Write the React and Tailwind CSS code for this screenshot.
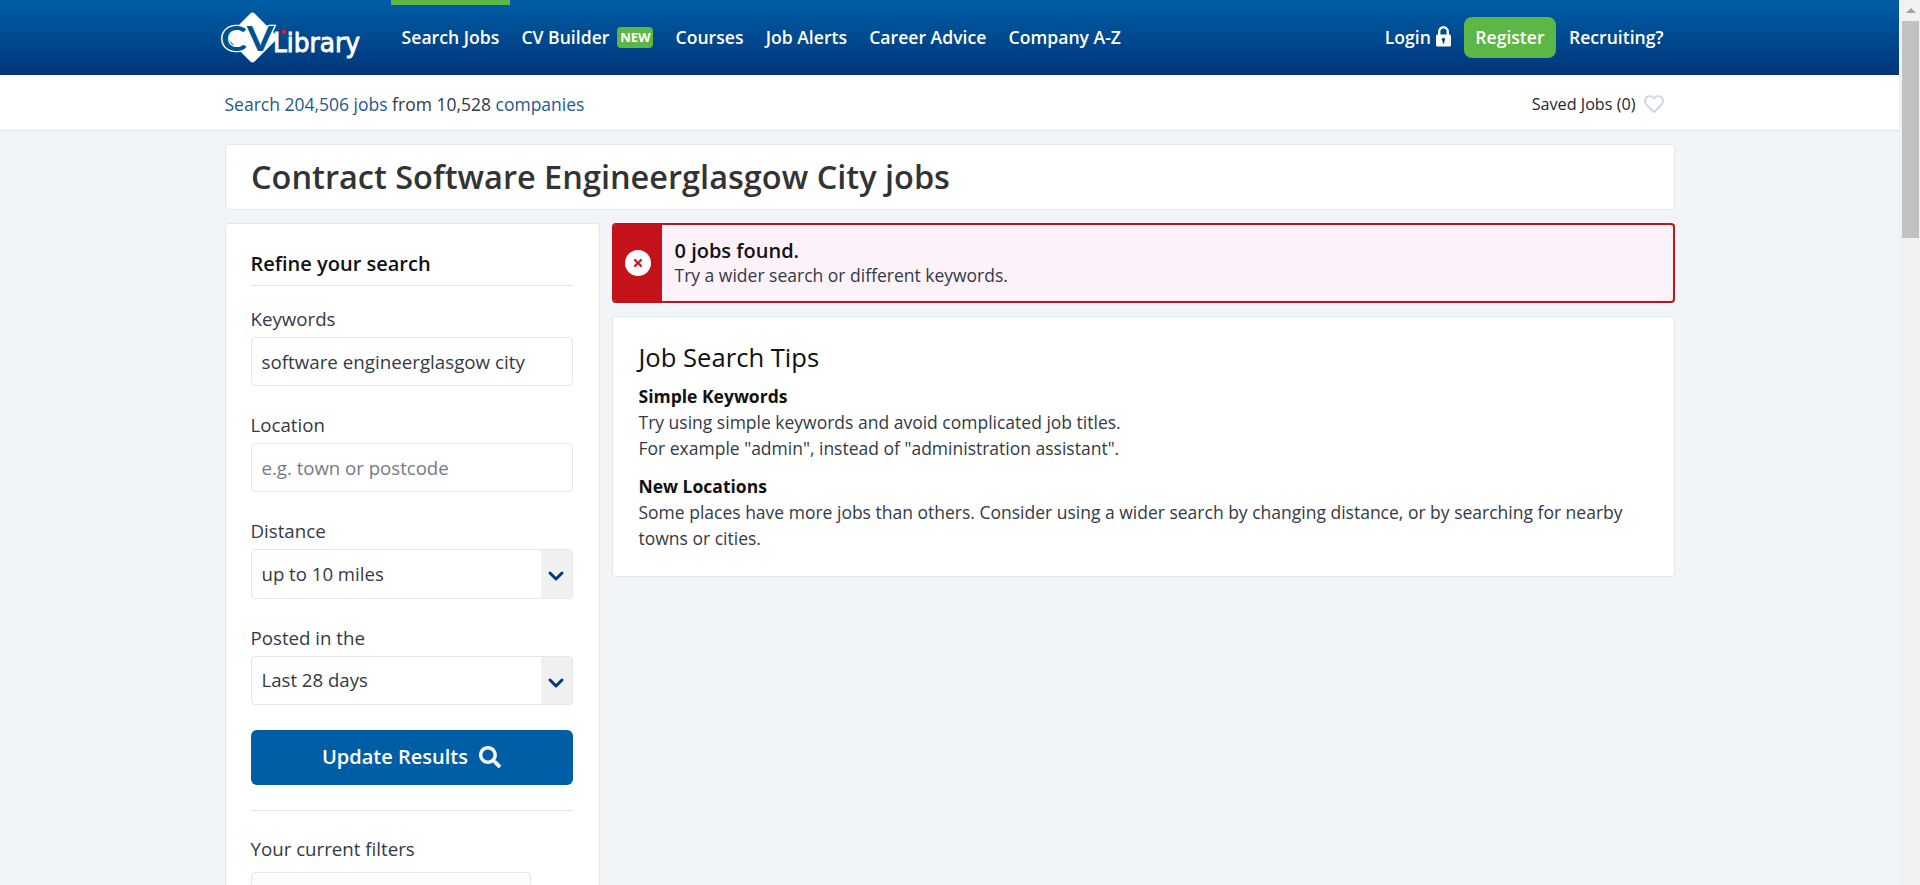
import React from "react";
import { FaSearch, FaRegHeart, FaTimes } from "react-icons/fa";
import { ChevronDown } from "lucide-react";

const Logo = () => (
  <svg width="142" height="60" viewBox="0 0 142 60" className="shrink-0 overflow-visible" aria-label="CV-Library logo">
    <rect x="13" y="11" width="37" height="37" rx="3" fill="#fff" transform="rotate(45 31.5 29.5)" />
    <text x="0" y="43" fontFamily="Lato, sans-serif" fontWeight="700" fontSize="34" fill="#00528f" stroke="#fff" strokeWidth="2.5" paintOrder="stroke" textLength="53" lengthAdjust="spacingAndGlyphs">CV</text>
    <text x="52" y="44" fontFamily="'DejaVu Sans', sans-serif" fontWeight="400" fontSize="27" fill="#fff" stroke="#fff" strokeWidth="0.9" textLength="87" lengthAdjust="spacingAndGlyphs">Library</text>
    <rect x="60" y="20" width="7" height="7" fill="#004a8a" />
    <circle cx="63" cy="24" r="2.4" fill="#e0202c" />
  </svg>
);

const Lock = () => (
  <svg width="15" height="21" viewBox="0 0 15 21" className="ml-[5px] mb-[3px]" aria-hidden="true">
    <path d="M3.2 9V5.6a4.3 4.3 0 0 1 8.6 0V9" fill="none" stroke="#fff" strokeWidth="2.4" />
    <rect x="0" y="8.5" width="15" height="12" rx="1.5" fill="#fff" />
    <circle cx="7.5" cy="13.5" r="1.7" fill="#00478c" />
    <rect x="6.7" y="13.5" width="1.6" height="4" fill="#00478c" />
  </svg>
);

const NavItem = ({ children, active }) => (
  <a className={`flex h-[75px] items-center px-[11.1px] border-t-[5px] pb-[5px] ${active ? "border-[#5cb746]" : "border-transparent"}`}>
    {children}
  </a>
);

const Label = ({ children }) => <div className="h-[26px] mb-[5px] text-[18.7px] leading-[26px] text-[#333a45]">{children}</div>;

const Select = ({ value, tall }) => (
  <div className={`flex ${tall ? "h-[50px]" : "h-[49px]"} rounded-[4px] border border-[#e3e6ea] overflow-hidden bg-white`}>
    <div className="flex-1 pl-[10px] pb-[1px] flex items-center text-[18.6px] text-[#333a45]">{value}</div>
    <div className="w-[31px] bg-[#f0f0f0] flex items-center justify-center">
      <ChevronDown size={24} strokeWidth={3} color="#003a7a" className="mt-[4px]" />
    </div>
  </div>
);

export default function App() {
  return (
    <div className="flex h-[885px] overflow-hidden bg-[#f1f5f8] text-[#333a45]" style={{ fontFamily: "'Open Sans', sans-serif" }}>
      <div className="flex-1 min-w-0">
        <header className="h-[75px] bg-gradient-to-b from-[#005ea6] to-[#00357a]">
          <div className="w-[1450px] mx-auto flex items-center h-full text-white text-[17.6px] font-semibold">
            <div className="-ml-[4px] mr-[28px]"><Logo /></div>
            <nav className="flex items-center gap-0">
              <NavItem active>Search Jobs</NavItem>
              <NavItem>
                CV Builder
                <span className="ml-[8px] h-[21px] w-[36px] rounded-[4px] bg-[#5cb746] text-[13px] font-bold flex items-center justify-center">NEW</span>
              </NavItem>
              <NavItem>Courses</NavItem>
              <NavItem>Job Alerts</NavItem>
              <NavItem>Career Advice</NavItem>
              <NavItem>Company A-Z</NavItem>
            </nav>
            <div className="ml-auto flex items-center pr-[11px]">
              <span>Login</span>
              <Lock />
              <span className="ml-[13px] mr-[13px] flex items-center justify-center w-[92px] h-[41px] rounded-[8px] bg-[#5cb746]">Register</span>
              <span>Recruiting?</span>
            </div>
          </div>
        </header>

        <div className="h-[56px] bg-white border-b border-[#e0e3e7]">
          <div className="w-[1450px] mx-auto h-full flex items-center justify-between text-[17.5px] pr-[11px] pt-[3px]">
            <div>
              <span className="text-[#23598f]">Search 204,506 jobs</span> from 10,528 <span className="text-[#23598f]">companies</span>
            </div>
            <div className="flex items-center text-[16.2px] text-[#222831]">
              Saved Jobs (0)
              <FaRegHeart size={20} color="#cfd7e3" className="ml-[8px]" />
            </div>
          </div>
        </div>

        <main className="w-[1450px] mx-auto pt-[13px]">
          <div className="h-[66px] bg-white border border-[#e3e6ea] rounded-[4px] flex items-center pl-[25.5px] text-[32.5px] font-semibold text-[#333333] mb-[13px]">
            Contract Software Engineerglasgow City jobs
          </div>
          <div className="grid grid-cols-[375px_1fr] gap-[12px] items-start">
            <aside className="bg-white border border-[#e3e6ea] rounded-[4px] pl-[25px] pr-[26px] pt-[27px] h-[800px]">
              <h2 className="h-[25px] leading-[25px] text-[20px] font-semibold text-[#111] mb-[9px]">Refine your search</h2>
              <div className="border-t border-[#e3e6ea] mb-[20px]" />
              <div className="mb-[26px]">
                <Label>Keywords</Label>
                <input readOnly value="software engineerglasgow city" className="w-full h-[49px] rounded-[4px] border border-[#e3e6ea] pl-[10px] text-[18.75px] text-[#333a45] outline-none" />
              </div>
              <div className="mb-[26px]">
                <Label>Location</Label>
                <input readOnly placeholder="e.g. town or postcode" className="w-full h-[49px] rounded-[4px] border border-[#e3e6ea] pl-[10px] text-[18.6px] outline-none placeholder:text-[#757c85]" />
              </div>
              <div className="mb-[26px]">
                <Label>Distance</Label>
                <Select value="up to 10 miles" tall />
              </div>
              <div className="mb-[25px]">
                <Label>Posted in the</Label>
                <Select value="Last 28 days" />
              </div>
              <button className="w-full h-[55px] pb-[1px] rounded-[6px] bg-[#005ea6] text-white text-[20px] font-semibold flex items-center justify-center gap-[11px]">
                Update Results
                <FaSearch size={22} />
              </button>
              <div className="border-t border-[#e3e6ea] mt-[25px] mb-[25px]" />
              <div className="h-[26px] leading-[26px] text-[18.7px] mb-[10px]">Your current filters</div>
              <div className="w-[280px] h-[60px] border border-[#e3e6ea] rounded-[4px] bg-[#fcfcfc]" />
            </aside>

            <section className="flex flex-col gap-[13px]">
              <div className="flex h-[80px] rounded-[4px] border-2 border-[#c4121a] bg-[#fdf2fa] overflow-hidden">
                <div className="w-[48px] bg-[#c4121a] flex items-center justify-center">
                  <span className="w-[26px] h-[26px] rounded-full bg-white flex items-center justify-center">
                    <FaTimes size={12} color="#d7142a" />
                  </span>
                </div>
                <div className="pl-[13px] flex flex-col justify-center">
                  <div className="text-[20px] leading-[25px] font-semibold text-[#111] -mt-[1px]">0 jobs found.</div>
                  <div className="text-[17.5px] leading-[25px]">Try a wider search or different keywords.</div>
                </div>
              </div>

              <div className="h-[261px] bg-white border border-[#e3e6ea] rounded-[4px] pl-[26px] pr-[25px] pt-[24px] text-[17.5px] leading-[26px]">
                <h2 className="text-[25.6px] leading-[33px] mb-[9px] font-normal text-[#111]">Job Search Tips</h2>
                <div className="font-bold text-[#111]">Simple Keywords</div>
                <p>Try using simple keywords and avoid complicated job titles.</p>
                <p className="mb-[12px]">For example "admin", instead of "administration assistant".</p>
                <div className="font-bold text-[#111]">New Locations</div>
                <p>Some places have more jobs than others. Consider using a wider search by changing distance, or by searching for nearby towns or cities.</p>
              </div>
            </section>
          </div>
        </main>
      </div>

      <div className="w-[21px] shrink-0 bg-[#f1f1f1] pl-[3px] pr-[1px] flex flex-col">
        <div className="h-[21px] flex items-center justify-center">
          <div className="w-0 h-0 border-x-[5px] border-x-transparent border-b-[5px] border-b-[#a3a3a3]" />
        </div>
        <div className="h-[217px] bg-[#c1c1c1]" />
      </div>
    </div>
  );
}
